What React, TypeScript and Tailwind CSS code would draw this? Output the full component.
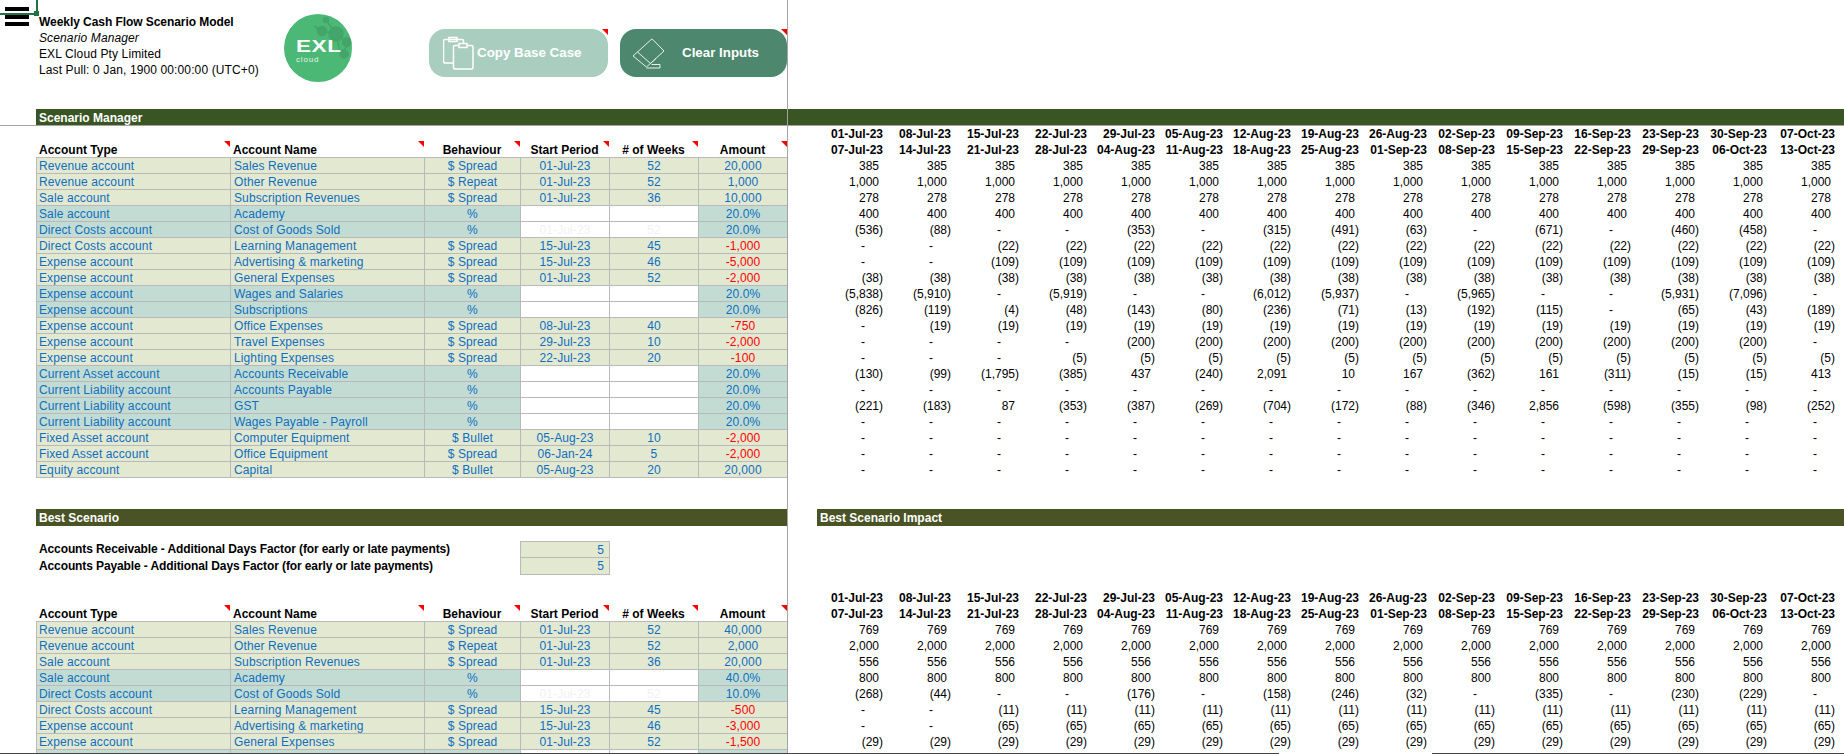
// Weekly cash flow scenario sheet: frozen header, scenario tables, weekly columns

type Account = {
  type: string;
  name: string;
  behaviour: string;
  start: string;
  weeks: string;
  amount: string;
  pct?: boolean;
};

const starts = ["01-Jul-23", "08-Jul-23", "15-Jul-23", "22-Jul-23", "29-Jul-23", "05-Aug-23", "12-Aug-23", "19-Aug-23", "26-Aug-23", "02-Sep-23", "09-Sep-23", "16-Sep-23", "23-Sep-23", "30-Sep-23", "07-Oct-23"];
const ends = ["07-Jul-23", "14-Jul-23", "21-Jul-23", "28-Jul-23", "04-Aug-23", "11-Aug-23", "18-Aug-23", "25-Aug-23", "01-Sep-23", "08-Sep-23", "15-Sep-23", "22-Sep-23", "29-Sep-23", "06-Oct-23", "13-Oct-23"];

const rep = (v: string, n: number) => Array<string>(n).fill(v);

const baseAccounts: Account[] = [
  { type: "Revenue account", name: "Sales Revenue", behaviour: "$ Spread", start: "01-Jul-23", weeks: "52", amount: "20,000" },
  { type: "Revenue account", name: "Other Revenue", behaviour: "$ Repeat", start: "01-Jul-23", weeks: "52", amount: "1,000" },
  { type: "Sale account", name: "Subscription Revenues", behaviour: "$ Spread", start: "01-Jul-23", weeks: "36", amount: "10,000" },
  { type: "Sale account", name: "Academy", behaviour: "%", start: "", weeks: "", amount: "20.0%", pct: true },
  { type: "Direct Costs account", name: "Cost of Goods Sold", behaviour: "%", start: "01-Jul-23", weeks: "52", amount: "20.0%", pct: true },
  { type: "Direct Costs account", name: "Learning Management", behaviour: "$ Spread", start: "15-Jul-23", weeks: "45", amount: "-1,000" },
  { type: "Expense account", name: "Advertising & marketing", behaviour: "$ Spread", start: "15-Jul-23", weeks: "46", amount: "-5,000" },
  { type: "Expense account", name: "General Expenses", behaviour: "$ Spread", start: "01-Jul-23", weeks: "52", amount: "-2,000" },
  { type: "Expense account", name: "Wages and Salaries", behaviour: "%", start: "", weeks: "", amount: "20.0%", pct: true },
  { type: "Expense account", name: "Subscriptions", behaviour: "%", start: "", weeks: "", amount: "20.0%", pct: true },
  { type: "Expense account", name: "Office Expenses", behaviour: "$ Spread", start: "08-Jul-23", weeks: "40", amount: "-750" },
  { type: "Expense account", name: "Travel Expenses", behaviour: "$ Spread", start: "29-Jul-23", weeks: "10", amount: "-2,000" },
  { type: "Expense account", name: "Lighting Expenses", behaviour: "$ Spread", start: "22-Jul-23", weeks: "20", amount: "-100" },
  { type: "Current Asset account", name: "Accounts Receivable", behaviour: "%", start: "", weeks: "", amount: "20.0%", pct: true },
  { type: "Current Liability account", name: "Accounts Payable", behaviour: "%", start: "", weeks: "", amount: "20.0%", pct: true },
  { type: "Current Liability account", name: "GST", behaviour: "%", start: "", weeks: "", amount: "20.0%", pct: true },
  { type: "Current Liability account", name: "Wages Payable - Payroll", behaviour: "%", start: "", weeks: "", amount: "20.0%", pct: true },
  { type: "Fixed Asset account", name: "Computer Equipment", behaviour: "$ Bullet", start: "05-Aug-23", weeks: "10", amount: "-2,000" },
  { type: "Fixed Asset account", name: "Office Equipment", behaviour: "$ Spread", start: "06-Jan-24", weeks: "5", amount: "-2,000" },
  { type: "Equity account", name: "Capital", behaviour: "$ Bullet", start: "05-Aug-23", weeks: "20", amount: "20,000" },
];

const bestAccounts: Account[] = [
  { type: "Revenue account", name: "Sales Revenue", behaviour: "$ Spread", start: "01-Jul-23", weeks: "52", amount: "40,000" },
  { type: "Revenue account", name: "Other Revenue", behaviour: "$ Repeat", start: "01-Jul-23", weeks: "52", amount: "2,000" },
  { type: "Sale account", name: "Subscription Revenues", behaviour: "$ Spread", start: "01-Jul-23", weeks: "36", amount: "20,000" },
  { type: "Sale account", name: "Academy", behaviour: "%", start: "", weeks: "", amount: "40.0%", pct: true },
  { type: "Direct Costs account", name: "Cost of Goods Sold", behaviour: "%", start: "01-Jul-23", weeks: "52", amount: "10.0%", pct: true },
  { type: "Direct Costs account", name: "Learning Management", behaviour: "$ Spread", start: "15-Jul-23", weeks: "45", amount: "-500" },
  { type: "Expense account", name: "Advertising & marketing", behaviour: "$ Spread", start: "15-Jul-23", weeks: "46", amount: "-3,000" },
  { type: "Expense account", name: "General Expenses", behaviour: "$ Spread", start: "01-Jul-23", weeks: "52", amount: "-1,500" },
  // only the top edge of this row shows above the window edge
  { type: "", name: "", behaviour: "", start: "", weeks: "", amount: "", pct: true },
];

const baseWeeks: string[][] = [
  rep("385", 15),
  rep("1,000", 15),
  rep("278", 15),
  rep("400", 15),
  ["(536)", "(88)", "-", "-", "(353)", "-", "(315)", "(491)", "(63)", "-", "(671)", "-", "(460)", "(458)", "-"],
  [...rep("-", 2), ...rep("(22)", 13)],
  [...rep("-", 2), ...rep("(109)", 13)],
  rep("(38)", 15),
  ["(5,838)", "(5,910)", "-", "(5,919)", "-", "-", "(6,012)", "(5,937)", "-", "(5,965)", "-", "-", "(5,931)", "(7,096)", "-"],
  ["(826)", "(119)", "(4)", "(48)", "(143)", "(80)", "(236)", "(71)", "(13)", "(192)", "(115)", "-", "(65)", "(43)", "(189)"],
  ["-", ...rep("(19)", 14)],
  [...rep("-", 4), ...rep("(200)", 10), "-"],
  [...rep("-", 3), ...rep("(5)", 12)],
  ["(130)", "(99)", "(1,795)", "(385)", "437", "(240)", "2,091", "10", "167", "(362)", "161", "(311)", "(15)", "(15)", "413"],
  rep("-", 15),
  ["(221)", "(183)", "87", "(353)", "(387)", "(269)", "(704)", "(172)", "(88)", "(346)", "2,856", "(598)", "(355)", "(98)", "(252)"],
  rep("-", 15),
  rep("-", 15),
  rep("-", 15),
  rep("-", 15),
];

const bestWeeks: string[][] = [
  rep("769", 15),
  rep("2,000", 15),
  rep("556", 15),
  rep("800", 15),
  ["(268)", "(44)", "-", "-", "(176)", "-", "(158)", "(246)", "(32)", "-", "(335)", "-", "(230)", "(229)", "-"],
  [...rep("-", 2), ...rep("(11)", 13)],
  [...rep("-", 2), ...rep("(65)", 13)],
  rep("(29)", 15),
];

function CommentMark() {
  return (
    <span className="absolute right-0 top-0 h-[6px] w-[6px] bg-[#ff0000] [clip-path:polygon(0_0,100%_0,100%_100%)]" />
  );
}

function Band({ title, className }: { title: string; className: string }) {
  return (
    <div className={`flex h-full items-center font-bold text-white ${className}`}>{title}</div>
  );
}

function HeaderRow() {
  const cols = [
    { label: "Account Type", cls: "pl-[3px] text-left" },
    { label: "Account Name", cls: "pl-[3px] text-left" },
    { label: "Behaviour", cls: "text-center" },
    { label: "Start Period", cls: "text-center" },
    { label: "# of Weeks", cls: "text-center" },
    { label: "Amount", cls: "text-center" },
  ];
  return (
    <div className="grid h-4 grid-cols-[194px_194px_96px_89px_89px_89px] font-bold text-black">
      {cols.map((c) => (
        <div key={c.label} className={`relative pt-px ${c.cls}`}>
          {c.label}
          <CommentMark />
        </div>
      ))}
    </div>
  );
}

function AccountRow({ row }: { row: Account }) {
  const shade = row.pct ? "bg-[#c3dcd3]" : "bg-[#e3e8d1]";
  const cell = "h-4 border-l border-t border-[#b9b9b9]";
  const inputTone = row.pct ? "bg-white text-[#f1f1f1]" : `${shade} text-[#0f6fbf]`;
  const amountTone = row.amount.startsWith("-") ? "text-[#ff0000]" : "text-[#0f6fbf]";
  return (
    <div className="grid grid-cols-[194px_194px_96px_89px_89px_89px] tracking-[0.12px] text-[#0f6fbf]">
      <div className={`${cell} ${shade} pl-[2px]`}>{row.type}</div>
      <div className={`${cell} ${shade} pl-[3px]`}>{row.name}</div>
      <div className={`${cell} ${shade} text-center`}>{row.behaviour}</div>
      <div className={`${cell} ${inputTone} text-center`}>{row.start}</div>
      <div className={`${cell} ${inputTone} text-center`}>{row.weeks}</div>
      <div className={`${cell} ${shade} ${amountTone} text-center`}>{row.amount}</div>
    </div>
  );
}

function WeekCell({ value }: { value: string }) {
  // accounting format: brackets sit at the edge, plain numbers leave room for one, dash is inset
  const pad = value === "-" ? "pr-[20px]" : value.startsWith("(") ? "pr-[2px]" : "pr-[6px]";
  return <div className={`w-[68px] text-right ${pad}`}>{value}</div>;
}

function DateRows() {
  return (
    <>
      {[starts, ends].map((dates) => (
        <div key={dates[0]} className="flex h-4 font-bold">
          {dates.map((d) => (
            <div key={d} className="w-[68px] pr-[2px] text-right">
              {d}
            </div>
          ))}
        </div>
      ))}
    </>
  );
}

function WeekRows({ rows }: { rows: string[][] }) {
  return (
    <>
      {rows.map((values, i) => (
        <div key={i} className="flex h-4">
          {values.map((v, j) => (
            <WeekCell key={j} value={v} />
          ))}
        </div>
      ))}
    </>
  );
}

function Logo() {
  return (
    <svg width="68" height="68" viewBox="0 0 68 68" className="shrink-0">
      <defs>
        <clipPath id="logoClip">
          <circle cx="34" cy="34" r="34" />
        </clipPath>
      </defs>
      <circle cx="34" cy="34" r="34" fill="#4cb876" />
      <g clipPath="url(#logoClip)" fill="#43a56a" stroke="#43a56a" strokeWidth="1.5">
        <path d="M38 17 L52 20 L63 28 L60 40 M52 20 L42 6 M38 17 L30 12 M52 20 L56 38" fill="none" />
        <circle cx="52" cy="20" r="7" />
        <circle cx="38" cy="17" r="4.5" />
        <circle cx="63" cy="28" r="4.5" />
        <circle cx="60" cy="40" r="4" />
        <circle cx="42" cy="6" r="2.5" />
      </g>
      <text
        x="0"
        y="38"
        transform="translate(12 0) scale(1.33 1)"
        fill="#ffffff"
        fontFamily="'Liberation Sans', sans-serif"
        fontWeight="700"
        fontSize="17"
        letterSpacing="0.4"
      >
        EXL
      </text>
      <text x="12" y="48" fill="#e4f4e9" fontFamily="'Liberation Sans', sans-serif" fontSize="8" letterSpacing="0.8">
        cloud
      </text>
    </svg>
  );
}

function CopyIcon() {
  return (
    <svg width="31" height="34" viewBox="0 0 31 34" fill="none" stroke="#ffffff" strokeWidth="1.5" className="shrink-0">
      <path d="M10 27 H2 a1.5 1.5 0 0 1 -1.5 -1.5 V5 a1.5 1.5 0 0 1 1.5 -1.5 H19 a1.5 1.5 0 0 1 1.5 1.5 V9" />
      <path d="M6 3.5 V1.5 H14 V3.5 V5.5 H6 Z" />
      <rect x="10.5" y="9.5" width="19.5" height="23.5" rx="1.5" />
      <path d="M16 10 V7.5 H24 V11.5 H16 Z" fill="#a9cebf" />
    </svg>
  );
}

function EraserIcon() {
  return (
    <svg width="33" height="31" viewBox="0 0 33 31" fill="none" stroke="#e6f0eb" strokeWidth="1" strokeLinejoin="round" className="shrink-0">
      <path d="M20 0.8 L32 13 L14.5 29 L1 18 Z" />
      <path d="M5.5 14 L18.5 25.5 L24 20.5" />
      <path d="M14.5 30 H28 V26.5 H19.5" />
    </svg>
  );
}

export default function App() {
  return (
    <div className="relative flex h-[754px] w-[1844px] flex-col overflow-hidden bg-white font-['Liberation_Sans',Arial,sans-serif] text-[12px] leading-[16px] text-black">
      <div className="flex min-h-0 flex-1">
        {/* left frozen pane */}
        <div className="w-[788px] shrink-0 border-r border-[#a3a3a3]">
          <div className="flex h-[109px] pl-[39px]">
            <div className="w-[245px] shrink-0 pt-[14px]">
              <div className="font-bold tracking-[-0.06px]">Weekly Cash Flow Scenario Model</div>
              <div className="italic tracking-[0.12px]">Scenario Manager</div>
              <div className="tracking-[0.12px]">EXL Cloud Pty Limited</div>
              <div className="tracking-[0.12px]">Last Pull: 0 Jan, 1900 00:00:00 (UTC+0)</div>
            </div>
            <div className="mt-[14px]">
              <Logo />
            </div>
            <div className="relative ml-[77px] mt-[29px] flex h-[48px] w-[179px] items-center rounded-[16px] bg-[#a9cebf] pl-[14px] text-[13.33px] font-bold text-white">
              <CopyIcon />
              <span className="ml-[3px]">Copy Base Case</span>
              <CommentMark />
            </div>
            <div className="relative ml-[12px] mt-[29px] flex h-[48px] w-[167px] items-center rounded-[16px] bg-[#4d876e] pl-[12px] text-[13.33px] font-bold text-white">
              <EraserIcon />
              <span className="ml-[17px]">Clear Inputs</span>
              <CommentMark />
            </div>
          </div>
          <div className="h-[17px] border-b border-[#a3a3a3] pl-[36px]">
            <Band title="Scenario Manager" className="bg-[#3a5524] pl-[3px] pt-px" />
          </div>
          <div className="pl-[36px]">
            <div className="h-[15px]" />
            <HeaderRow />
            <div className="border-b border-[#b9b9b9]">
              {baseAccounts.map((row) => (
                <AccountRow key={row.name} row={row} />
              ))}
            </div>
            <div className="h-[31px]" />
            <div className="h-[17px]">
              <Band title="Best Scenario" className="bg-[#4a5325] pl-[3px]" />
            </div>
            <div className="h-[15px]" />
            <div className="font-bold">
              <div className="grid h-4 grid-cols-[484px_90px]">
                <div className="pl-[3px] tracking-[-0.11px]">Accounts Receivable - Additional Days Factor (for early or late payments)</div>
                <div className="border-l border-r border-t border-[#b9b9b9] bg-[#e3e8d1] pr-[5px] text-right font-normal text-[#0f6fbf]">5</div>
              </div>
              <div className="grid h-[17px] grid-cols-[484px_90px]">
                <div className="pl-[3px] pt-px tracking-[-0.11px]">Accounts Payable - Additional Days Factor (for early or late payments)</div>
                <div className="border border-[#b9b9b9] bg-[#e3e8d1] pr-[5px] text-right font-normal text-[#0f6fbf]">5</div>
              </div>
            </div>
            <div className="h-[31px]" />
            <HeaderRow />
            {bestAccounts.map((row, i) => (
              <AccountRow key={i} row={row} />
            ))}
          </div>
        </div>

        {/* right weekly pane */}
        <div className="min-w-0 flex-1">
          <div className="h-[109px]" />
          <div className="h-[17px] border-b border-[#a3a3a3]">
            <div className="h-full bg-[#3a5524]" />
          </div>
          <div className="pl-[29px]">
            <DateRows />
            <WeekRows rows={baseWeeks} />
          </div>
          <div className="h-[31px]" />
          <div className="h-[17px] pl-[29px]">
            <Band title="Best Scenario Impact" className="bg-[#4a5325] pl-[3px]" />
          </div>
          <div className="h-[64px]" />
          <div className="pl-[29px]">
            <DateRows />
            <WeekRows rows={bestWeeks} />
          </div>
        </div>
      </div>

      {/* window edge with a break in it */}
      <div className="flex h-px shrink-0">
        <div className="w-[1279px] bg-[#444444]" />
        <div className="w-[153px]" />
        <div className="flex-1 bg-[#444444]" />
      </div>

      {/* menu button and selected cell handle sit over the sheet */}
      <div className="absolute left-[5px] top-[7px] flex h-[19px] w-[24px] flex-col justify-between">
        <div className="h-[4px] bg-black" />
        <div className="h-[4px] bg-black" />
        <div className="h-[4px] bg-black" />
      </div>
      <div className="absolute left-[36px] top-0 h-[12px] w-[2px] bg-[#217346]" />
      <div className="absolute left-0 top-[13px] h-[2px] w-[34px] bg-[#217346]" />
      <div className="absolute left-[34px] top-[11px] h-[5px] w-[5px] bg-[#217346]" />
    </div>
  );
}
